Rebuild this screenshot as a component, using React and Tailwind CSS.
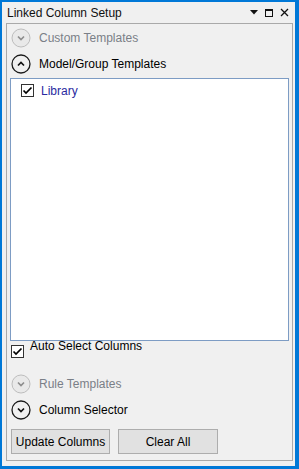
import React from "react";

function CircleChevron({ up = false, disabled = false }) {
  return (
    <svg width="20" height="20" viewBox="0 0 20 20" className="shrink-0">
      <circle
        cx="10"
        cy="10"
        r="9"
        fill={disabled ? "#e9e9e9" : "none"}
        stroke={disabled ? "#bdbdbd" : "#1a1a1a"}
        strokeWidth={disabled ? 1 : 1.3}
      />
      {up ? (
        <path d="M7 11.5 L10 8.5 L13 11.5" fill="none" stroke="#111" strokeWidth="1.7" />
      ) : (
        <path
          d="M7 8.5 L10 11.5 L13 8.5"
          fill="none"
          stroke={disabled ? "#8d8d8d" : "#111"}
          strokeWidth="1.7"
        />
      )}
    </svg>
  );
}

function Check() {
  return (
    <div className="w-[13px] h-[13px] border border-[#333] bg-white shrink-0 flex items-center justify-center">
      <svg width="11" height="11" viewBox="0 0 11 11">
        <path d="M1.5 5.5 L4 8 L9.5 2.5" fill="none" stroke="#000" strokeWidth="1.7" />
      </svg>
    </div>
  );
}

function Section({ label, up, disabled }) {
  return (
    <div className="h-[26px] flex items-center pl-[4px] gap-[8px]">
      <CircleChevron up={up} disabled={disabled} />
      <span className={disabled ? "text-[#7a7f87]" : "text-black"}>{label}</span>
    </div>
  );
}

export default function App() {
  return (
    <div
      className="w-[299px] h-[469px] bg-[#0078d7] pt-[2px] pl-[2px] pr-[4px] pb-[3px] flex flex-col text-[12px] leading-none"
      style={{ fontFamily: '"Liberation Sans", Arial, sans-serif' }}
    >
      <div className="flex-1 bg-[#f0f0f0] flex flex-col">
        <div className="h-[21px] flex items-center pl-[5px] pr-[6px]">
          <span className="flex-1 text-[#111]">Linked Column Setup</span>
          <div className="flex items-center gap-[7px]">
            <svg width="8" height="5" viewBox="0 0 8 5">
              <path d="M0 0 H8 L4 4.5 Z" fill="#111" />
            </svg>
            <svg width="8" height="8" viewBox="0 0 8 8">
              <rect x="0.5" y="0.5" width="7" height="7" fill="none" stroke="#111" />
              <rect x="0" y="0" width="8" height="2" fill="#111" />
            </svg>
            <svg width="9" height="9" viewBox="0 0 9 9">
              <path d="M1 1 L8 8 M8 1 L1 8" stroke="#111" strokeWidth="1.3" />
            </svg>
          </div>
        </div>
        <div className="flex-1 ml-[4px] mr-[2px] mb-[5px] border border-[#a9a9a9] flex flex-col">
          <div className="h-[1px]" />
          <Section label="Custom Templates" disabled />
          <Section label="Model/Group Templates" up />
          <div className="mt-[1px] mx-[3px] h-[263px] bg-white border border-[#7d9cc4] pt-[5px] pl-[10px]">
            <div className="flex items-center gap-[7px]">
              <Check />
              <span className="text-[#2a2aa0]">Library</span>
            </div>
          </div>
          <div className="h-[22px] flex items-start pl-[4px] pt-[4px] gap-[6px]">
            <Check />
            <span className="-mt-[5px]">Auto Select Columns</span>
          </div>
          <div className="h-[8px]" />
          <Section label="Rule Templates" disabled />
          <Section label="Column Selector" />
          <div className="flex gap-[8px] pl-[4px] mt-[6px]">
            <div className="w-[99px] h-[25px] bg-[#e1e1e1] border border-[#adadad] flex items-center justify-center">
              Update Columns
            </div>
            <div className="w-[100px] h-[25px] bg-[#e1e1e1] border border-[#adadad] flex items-center justify-center">
              Clear All
            </div>
          </div>
        </div>
      </div>
    </div>
  );
}
